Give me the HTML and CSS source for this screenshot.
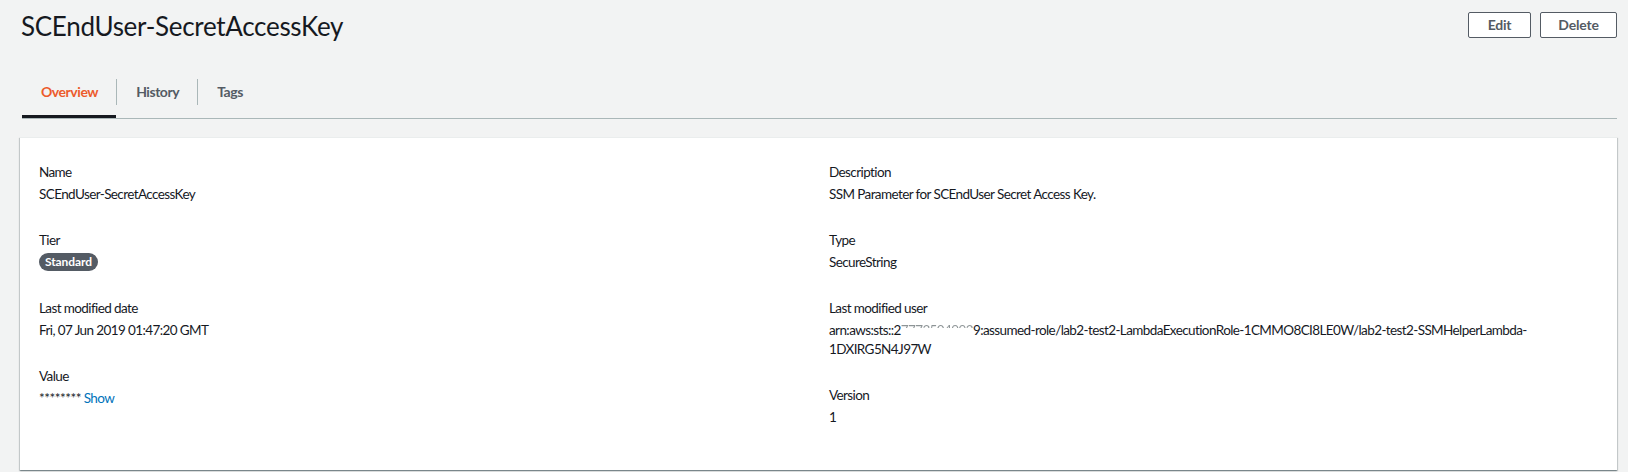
FILE: index.html
```html
<!DOCTYPE html>
<html lang="en">
<head>
<meta charset="utf-8">
<title>SCEndUser-SecretAccessKey</title>
<link rel="stylesheet" href="styles.css">
</head>
<body>
<div class="page">
  <header class="header">
    <h1 class="title">SCEndUser-SecretAccessKey</h1>
    <div class="actions">
      <button class="btn btn-edit">Edit</button>
      <button class="btn btn-delete">Delete</button>
    </div>
  </header>

  <nav class="tabs">
    <a class="tab active">Overview</a>
    <span class="tab-sep"></span>
    <a class="tab">History</a>
    <span class="tab-sep"></span>
    <a class="tab">Tags</a>
  </nav>

  <section class="card">
    <div class="col">
      <div class="field">
        <div class="label">Name</div>
        <div class="value">SCEndUser-SecretAccessKey</div>
      </div>
      <div class="field">
        <div class="label">Tier</div>
        <div class="value"><span class="badge">Standard</span></div>
      </div>
      <div class="field">
        <div class="label">Last modified date</div>
        <div class="value">Fri, 07 Jun 2019 01:47:20 GMT</div>
      </div>
      <div class="field">
        <div class="label">Value</div>
        <div class="value"><span class="stars">********</span> <a class="link">Show</a></div>
      </div>
    </div>
    <div class="col">
      <div class="field">
        <div class="label">Description</div>
        <div class="value">SSM Parameter for SCEndUser Secret Access Key.</div>
      </div>
      <div class="field">
        <div class="label">Type</div>
        <div class="value">SecureString</div>
      </div>
      <div class="field">
        <div class="label">Last modified user</div>
        <div class="value">arn:aws:sts::2<span class="masked">7773504992</span>9:assumed-role/lab2-test2-LambdaExecutionRole-1CMMO8CI8LE0W/lab2-test2-SSMHelperLambda-<wbr>1DXIRG5N4J97W</div>
      </div>
      <div class="field">
        <div class="label">Version</div>
        <div class="value">1</div>
      </div>
    </div>
  </section>
</div>
</body>
</html>
```
FILE: styles.css
```css
* { box-sizing: border-box; }

html, body {
  margin: 0;
  padding: 0;
  background: #f2f3f3;
  height: 100%;
  overflow: hidden;
}

body {
  font-family: Lato, "Liberation Sans", sans-serif;
  font-size: 14px;
  color: #16191f;
}

.page {
  padding: 0 11px 0 20px;
}

/* header */
.header {
  display: flex;
  justify-content: space-between;
  align-items: flex-start;
  padding-top: 10px;
}

.title {
  margin: 0 0 0 1px;
  font-size: 26px;
  line-height: 32px;
  font-weight: 400;
  letter-spacing: -0.3px;
  color: #16191f;
}

.actions {
  display: flex;
  gap: 9px;
  margin-top: 2px;
}

.btn {
  height: 26px;
  padding: 0;
  border: 1px solid #545b64;
  border-radius: 2px;
  background: #ffffff;
  color: #545b64;
  font-family: inherit;
  font-size: 14px;
  font-weight: 700;
  letter-spacing: -0.2px;
  line-height: 24px;
}

.btn-edit { width: 63px; }
.btn-delete { width: 77px; }

/* tabs */
.tabs {
  display: flex;
  align-items: center;
  margin: 26px 0 0 2px;
  height: 51px;
  border-bottom: 1px solid #aab7b8;
}

.tab {
  display: flex;
  align-items: center;
  height: 50px;
  padding: 0 18px 0 19px;
  border-bottom: 3px solid transparent;
  font-weight: 700;
  letter-spacing: -0.45px;
  color: #545b64;
  cursor: pointer;
}

.tab.active {
  color: #ec5b2c;
  border-bottom-color: #16191f;
}

.tab-sep {
  width: 1px;
  height: 26px;
  margin-top: -3px;
  background: #aab7b8;
}

/* card */
.card {
  display: grid;
  grid-template-columns: 1fr 1fr;
  column-gap: 20px;
  margin-top: 18px;
  height: 333px;
  padding: 24px 18px 0 19px;
  background: #ffffff;
  box-shadow: 0 1px 1px 0 rgba(0, 28, 36, 0.3),
              1px 1px 1px 0 rgba(0, 28, 36, 0.15),
              -1px 1px 1px 0 rgba(0, 28, 36, 0.15);
  border-top: 1px solid #eaeded;
  font-size: 13.5px;
  letter-spacing: -0.6px;
}

.col {
  display: flex;
  flex-direction: column;
}

.field {
  margin-bottom: 26px;
}

.label {
  line-height: 20px;
  margin-bottom: 3px;
}

.value {
  line-height: 19px;
}

.badge {
  display: inline-block;
  height: 18px;
  padding: 0 6px;
  border-radius: 9px;
  background: #545b64;
  color: #ffffff;
  font-size: 12px;
  font-weight: 700;
  line-height: 18px;
  letter-spacing: -0.1px;
  vertical-align: top;
}

.stars {
  letter-spacing: -0.5px;
}

.link {
  color: #0073bb;
  cursor: pointer;
}

.masked {
  color: transparent;
  background: linear-gradient(to bottom, #8d9496 0, #8d9496 38%, transparent 38%);
  -webkit-background-clip: text;
  background-clip: text;
}
```
